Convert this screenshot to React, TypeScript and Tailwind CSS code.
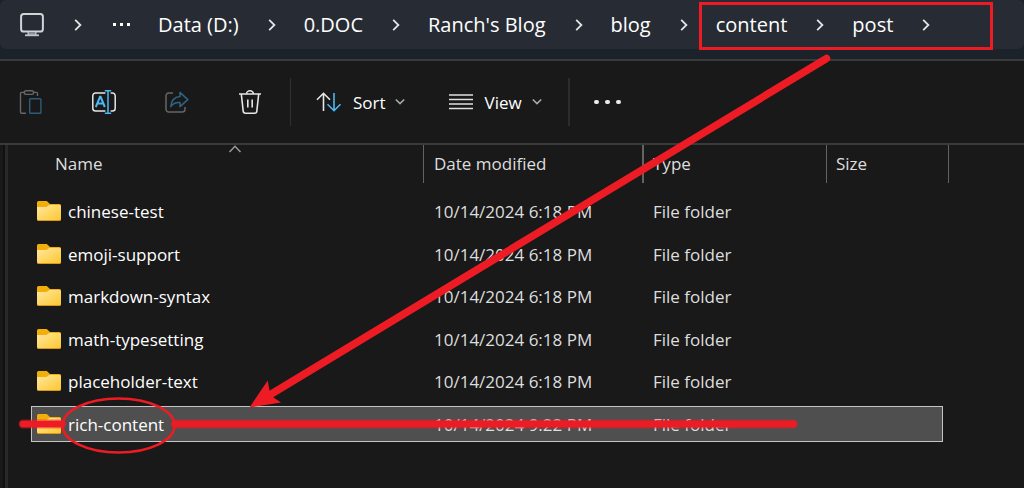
import type { ReactNode } from "react";

const crumbs = ["Data (D:)", "0.DOC", "Ranch's Blog", "blog", "content", "post"];

const files = [
  { name: "chinese-test", date: "10/14/2024 6:18 PM" },
  { name: "emoji-support", date: "10/14/2024 6:18 PM" },
  { name: "markdown-syntax", date: "10/14/2024 6:18 PM" },
  { name: "math-typesetting", date: "10/14/2024 6:18 PM" },
  { name: "placeholder-text", date: "10/14/2024 6:18 PM" },
  { name: "rich-content", date: "10/14/2024 9:22 PM", selected: true },
];

function CrumbChevron() {
  return (
    <svg className="h-3 w-2 shrink-0" viewBox="0 0 8 12" fill="none" stroke="#e4e4e6" strokeWidth="1.8" aria-hidden="true">
      <path d="M1.2 0.8 6.4 6 1.2 11.2" />
    </svg>
  );
}

function DownChevron() {
  return (
    <svg className="h-2 w-[10px] shrink-0" viewBox="0 0 10 8" fill="none" stroke="#a9a9a9" strokeWidth="1.6" aria-hidden="true">
      <path d="M0.8 1.5 5 5.6 9.2 1.5" />
    </svg>
  );
}

function MonitorIcon() {
  return (
    <svg className="h-6 w-6" viewBox="0 0 24 24" fill="none" aria-hidden="true">
      <rect x="1.1" y="1.1" width="21.8" height="17.4" rx="2.6" stroke="#d2d3d5" strokeWidth="2" />
      <path d="M8 19h8v3H8z" fill="#8b8d92" />
      <path d="M8.2 19v3M15.8 19v3" stroke="#c3c4c8" strokeWidth="1.4" />
      <path d="M5 22.3h14" stroke="#c3c4c8" strokeWidth="1.8" />
    </svg>
  );
}

function PasteIcon() {
  return (
    <svg className="h-6 w-6" viewBox="0 0 24 24" fill="none" strokeWidth="1.4" aria-hidden="true">
      <path d="M7 23.3H2.7a1.2 1.2 0 0 1-1.2-1.2V3.6a1.2 1.2 0 0 1 1.2-1.2H5M14 2.4h3.3a1.2 1.2 0 0 1 1.2 1.2V6" stroke="#676767" />
      <rect x="5.2" y="0.8" width="9.4" height="3.6" rx="1.8" stroke="#676767" />
      <rect x="10.7" y="8.7" width="11.2" height="14.6" rx="0.8" stroke="#2c5c7a" />
    </svg>
  );
}

function RenameIcon() {
  return (
    <svg className="h-6 w-6" viewBox="0 0 24 24" fill="none" strokeWidth="1.5" aria-hidden="true">
      <path d="M13.4 3H3.6A2.8 2.8 0 0 0 .8 5.8v12.4A2.8 2.8 0 0 0 3.6 21h9.8M18.6 3h1.8a2.8 2.8 0 0 1 2.8 2.8v12.4a2.8 2.8 0 0 1-2.8 2.8h-1.8" stroke="#e6e6e6" />
      <path d="M3.8 17 8 6.800h.6L12.8 17M5.3 13.5h6" stroke="#4cb8f2" strokeWidth="2" />
      <path d="M12.8.8h6.4M16 .8v22.400M12.8 23.200h6.4" stroke="#4cb8f2" />
    </svg>
  );
}

function ShareIcon() {
  return (
    <svg className="h-6 w-6" viewBox="0 0 24 24" fill="none" strokeWidth="1.5" aria-hidden="true">
      <path d="M8 3H3.8A2.8 2.8 0 0 0 1 5.8v13.4A2.8 2.8 0 0 0 3.8 22h13.4a2.8 2.8 0 0 0 2.8-2.8V17" stroke="#666" />
      <path d="M15 2.4 22.8 9.6 15 16.6v-4C10.8 12.3 8 13.5 5.8 16.6 6.3 10.5 9.5 7 15 6.5z" stroke="#2f6484" strokeLinejoin="round" />
    </svg>
  );
}

function TrashIcon() {
  return (
    <svg className="h-6 w-6" viewBox="0 0 24 24" fill="none" stroke="#e6e6e6" strokeWidth="1.6" aria-hidden="true">
      <path d="M1 4h22M8.5 4a3.5 3.2 0 0 1 7 0M3.3 4l1.9 17.2a2.2 2.2 0 0 0 2.2 2h9.2a2.2 2.2 0 0 0 2.2-2L20.7 4M9.8 9.5v8M14.2 9.5v8" />
    </svg>
  );
}

function SortIcon() {
  return (
    <svg className="h-6 w-[26px]" viewBox="0 0 26 24" fill="none" strokeWidth="1.6" aria-hidden="true">
      <path d="M7.5 21V3.5M1 9.8l6.5-6.5L14 9.8" stroke="#e6e6e6" />
      <path d="M18 3v17.5M11.5 14.2l6.500 6.500 6.500-6.500" stroke="#4cb8f2" />
    </svg>
  );
}

function ViewIcon() {
  return (
    <svg className="h-4 w-6" viewBox="0 0 24 16" stroke="#e0e0e0" strokeWidth="1.5" aria-hidden="true">
      <path d="M0 1h24M0 5.5h24M0 10h24M0 14.5h24" />
    </svg>
  );
}

function FolderIcon() {
  return (
    <svg className="h-5 w-6 shrink-0" viewBox="0 0 24 20" aria-hidden="true">
      <defs>
        <linearGradient id="folderFront" x1="0" y1="0" x2="1" y2="1">
          <stop offset="0" stopColor="#ffe8a0" />
          <stop offset="1" stopColor="#fdc730" />
        </linearGradient>
      </defs>
      <path d="M0 1.5Q0 0 1.5 0h8.300L13 3h9.500Q24 3 24 4.500V18H0z" fill="#f2ae0b" />
      <path d="M0 7.8h9.500L12.300 4.500h10.200Q24 4.500 24 6v12.500q0 1.500-1.500 1.500h-21Q0 20 0 18.500z" fill="#d99a17" />
      <path d="M0 6h9.500L12.300 4h10.200Q24 4 24 5.500v12q0 1.500-1.500 1.500h-21Q0 19 0 17.500z" fill="url(#folderFront)" />
    </svg>
  );
}

function ToolButton({ label, children }: { label: string; children: ReactNode }) {
  return (
    <button type="button" aria-label={label} className="flex size-6 items-center justify-center">
      {children}
    </button>
  );
}

function ColumnHeader({ children, edge }: { children: ReactNode; edge: string }) {
  return (
    <th className="p-0 pb-[10px] text-left font-normal">
      <div className={`flex h-[38px] items-center border-[#636363] ${edge}`}>{children}</div>
    </th>
  );
}

function Annotations() {
  return (
    <svg className="pointer-events-none absolute left-0 top-0 h-[488px] w-[1024px]" viewBox="0 0 1024 488" fill="none" stroke="#ed1c24" aria-hidden="true">
      <rect x="700.5" y="3.5" width="291" height="45" strokeWidth="3" />
      <path d="M826.5 58.5 268 396" strokeWidth="7.5" strokeLinecap="round" />
      <path d="M249.5 407.5 267.7 380.5 269.5 390.5 273.5 397.5 281 402.5z" fill="#ed1c24" stroke="none" />
      <path d="M23 424H62M175 424H793" strokeOpacity="0.5" strokeWidth="9" strokeLinecap="round" />
      <path d="M23 424H62M175 424H794" strokeWidth="6.5" strokeLinecap="round" />
      <ellipse cx="118.5" cy="425.5" rx="56" ry="27" strokeWidth="2.6" />
    </svg>
  );
}

export default function App() {
  return (
    <div className="relative flex min-h-screen flex-col overflow-hidden bg-[#191919] font-['Open_Sans','Noto_Sans',sans-serif] text-white">
      <header className="border-b-2 border-[#3a3a3a] bg-[#1c222a] pb-[10px]">
        <nav aria-label="Address" className="flex h-[49px] items-center rounded-md bg-[#272c34] pl-5 text-[20px] leading-7">
          <button type="button" aria-label="This PC" className="mr-[30px]">
            <MonitorIcon />
          </button>
          <CrumbChevron />
          <button type="button" aria-label="More locations" className="ml-[31px] mr-7 flex gap-1">
            <span className="size-[3px] bg-white" />
            <span className="size-[3px] bg-white" />
            <span className="size-[3px] bg-white" />
          </button>
          <ol className="flex">
            {crumbs.map((crumb) => (
              <li key={crumb} className="flex items-center">
                <a href="#" className="whitespace-nowrap">
                  {crumb}
                </a>
                <span className="ml-[29px] mr-7">
                  <CrumbChevron />
                </span>
              </li>
            ))}
          </ol>
        </nav>
      </header>

      <div role="toolbar" aria-label="File actions" className="flex h-[84px] items-center border-b-2 border-[#3a3a3a] pl-[19px] text-[17px] leading-6">
        <div className="flex gap-[49px]">
          <ToolButton label="Paste"><PasteIcon /></ToolButton>
          <ToolButton label="Rename"><RenameIcon /></ToolButton>
          <ToolButton label="Share"><ShareIcon /></ToolButton>
          <ToolButton label="Delete"><TrashIcon /></ToolButton>
        </div>
        <span className="ml-7 mr-[25px] h-12 w-px bg-[#303030]" />
        <button type="button" className="flex items-center">
          <SortIcon />
          <span className="ml-[11px] mr-[9px] pt-0.5">Sort</span>
          <DownChevron />
        </button>
        <button type="button" className="ml-11 flex items-center">
          <ViewIcon />
          <span className="ml-3 mr-[10px] pt-0.5">View</span>
          <DownChevron />
        </button>
        <span className="ml-[26px] mr-6 h-12 w-0.5 bg-[#2c2c2c]" />
        <button type="button" aria-label="See more" className="flex gap-[6px]">
          <span className="h-1 w-[5px] rounded-xs bg-[#ececec]" />
          <span className="h-1 w-[5px] rounded-xs bg-[#ececec]" />
          <span className="h-1 w-[5px] rounded-xs bg-[#ececec]" />
        </button>
      </div>

      <main className="flex grow">
        <div className="w-2 shrink-0 border-l-3 border-r-3 border-l-[#191919] border-r-[#292929] bg-[#111]" />
        <table className="ml-[23px] w-[918px] table-fixed self-start border-collapse text-[17px] leading-6 text-[#dedede]">
          <colgroup>
            <col className="w-[393px]" />
            <col className="w-[220px]" />
            <col className="w-[183px]" />
            <col />
          </colgroup>
          <thead>
            <tr>
              <ColumnHeader edge="relative border-r pl-6">
                Name
                <svg className="absolute left-[197px] top-0 h-2 w-[14px]" viewBox="0 0 14 8" fill="none" stroke="#9a9a9a" strokeWidth="1.5" aria-hidden="true">
                  <path d="M1.5 7 7 1.3 12.5 7" />
                </svg>
              </ColumnHeader>
              <ColumnHeader edge="border-r-2 pl-[10px]">Date modified</ColumnHeader>
              <ColumnHeader edge="border-r pl-[9px]">Type</ColumnHeader>
              <ColumnHeader edge="border-r pl-[9px]">Size</ColumnHeader>
            </tr>
          </thead>
          <tbody>
            {files.map((file) => {
              const tone = file.selected ? "border-[#c4c4c4] bg-[#4f4f4f]" : "border-transparent";
              return (
                <tr key={file.name} aria-selected={Boolean(file.selected)} className="odd:*:pb-[7px] even:*:pb-[6px]">
                  <td className="px-0 pt-0">
                    <div className={`flex h-9 items-center gap-[7px] border-y border-l pl-[5px] text-white ${tone}`}>
                      <FolderIcon />
                      <span className="pt-0.5">{file.name}</span>
                    </div>
                  </td>
                  <td className="px-0 pt-0">
                    <div className={`flex h-9 items-center border-y pl-[10px] pt-0.5 ${tone}`}>{file.date}</div>
                  </td>
                  <td className="px-0 pt-0">
                    <div className={`flex h-9 items-center border-y pl-[9px] pt-0.5 ${tone}`}>File folder</div>
                  </td>
                  <td className="pl-0 pr-[6px] pt-0">
                    <div className={`h-9 border-y border-r ${tone}`} />
                  </td>
                </tr>
              );
            })}
          </tbody>
        </table>
      </main>

      <Annotations />
    </div>
  );
}
